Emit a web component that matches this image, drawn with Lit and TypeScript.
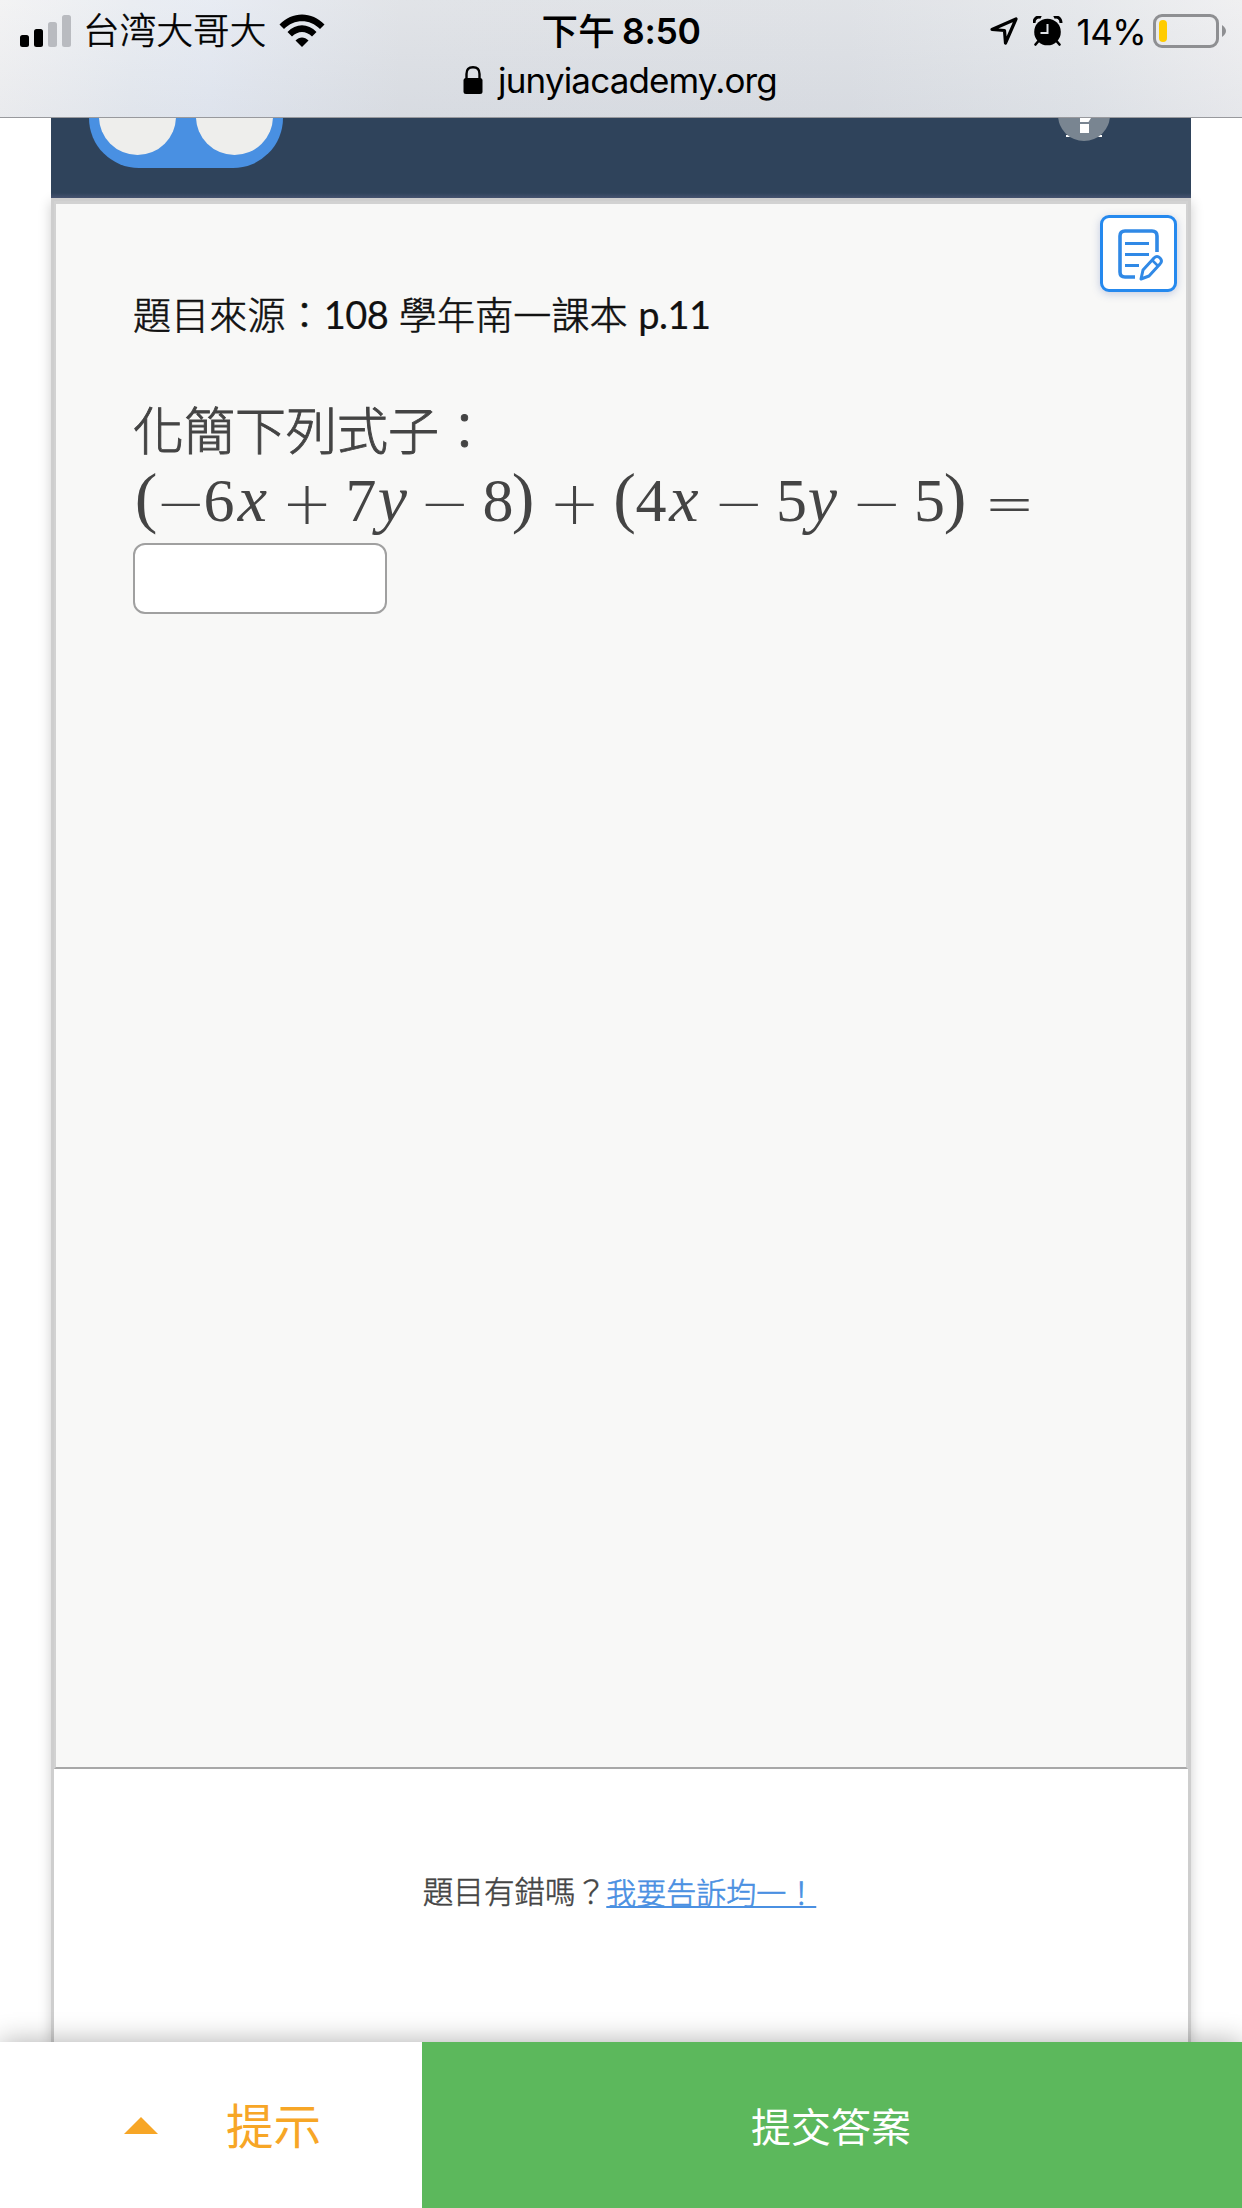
import { LitElement, html, css, svg } from "lit";
import { customElement } from "lit/decorators.js";

type Token = { text: string; center: number; kind: "num" | "var" | "op" | "paren" };

/* Glyph centres of the formula, in pixels from its left edge. */
const FORMULA: Token[] = [
  { text: "(", center: 13, kind: "paren" },
  { text: "−", center: 47.5, kind: "op" },
  { text: "6", center: 86, kind: "num" },
  { text: "x", center: 119.5, kind: "var" },
  { text: "+", center: 174, kind: "op" },
  { text: "7", center: 228, kind: "num" },
  { text: "y", center: 259.5, kind: "var" },
  { text: "−", center: 311.5, kind: "op" },
  { text: "8", center: 365, kind: "num" },
  { text: ")", center: 390, kind: "paren" },
  { text: "+", center: 441.5, kind: "op" },
  { text: "(", center: 491.5, kind: "paren" },
  { text: "4", center: 518, kind: "num" },
  { text: "x", center: 551, kind: "var" },
  { text: "−", center: 605.5, kind: "op" },
  { text: "5", center: 658.5, kind: "num" },
  { text: "y", center: 689.5, kind: "var" },
  { text: "−", center: 743.5, kind: "op" },
  { text: "5", center: 796.5, kind: "num" },
  { text: ")", center: 822, kind: "paren" },
  { text: "=", center: 876.5, kind: "op" },
];

@customElement("status-bar")
export class StatusBar extends LitElement {
  static styles = css`
    :host {
      display: flex;
      flex-direction: column;
      box-sizing: border-box;
      height: 118px;
      border-bottom: 1px solid #98999d;
      color: #000;
      font-family: Inter, "Noto Sans CJK SC", sans-serif;
      background:
        linear-gradient(to bottom, rgba(255, 255, 255, 0.2), rgba(205, 211, 222, 0.2)),
        linear-gradient(to right, #f0f0f1 0, #e5e9ef 130px, #e2e7f0 210px, #dadde2 400px, #d9dce1 850px, #e0e3e7 1080px, #ececee 1242px);
    }
    .row {
      display: grid;
      grid-template-columns: 1fr auto 1fr;
      height: 62px;
      align-items: center;
    }
    .left, .right, .clock, .address { display: flex; align-items: center; white-space: nowrap; }
    .left { padding-left: 20px; }
    .right { justify-content: flex-end; padding-right: 15px; }
    .carrier { font-size: 36.5px; font-weight: 300; margin-left: 12px; margin-right: 12px; line-height: 60px; letter-spacing: 0.2px; -webkit-text-stroke: 0.6px #000; }
    .clock { font-size: 35.5px; font-weight: 600; letter-spacing: -0.3px; line-height: 60px; gap: 7px; padding-top: 1px; }
    .ampm { font-weight: 500; font-size: 36.5px; letter-spacing: 0.3px; }
    .percent { font-size: 35px; margin: 0 7px 0 14px; letter-spacing: -0.6px; padding-top: 1px; }
    .alarm { margin-left: 15px; }
    .address { justify-content: center; height: 36px; gap: 15px; font-size: 35px; letter-spacing: -0.85px; padding-right: 2px; }
    svg { display: block; }
  `;

  render() {
    return html`
      <div class="row">
        <div class="left">
          <svg width="51" height="32" viewBox="0 0 51 32">
            <rect x="0" y="20" width="9" height="12" rx="2.5" />
            <rect x="14" y="14" width="9" height="18" rx="2.5" />
            <rect x="28" y="7" width="9" height="25" rx="2.5" fill="#b9bbc0" />
            <rect x="42" y="0" width="9" height="32" rx="2.5" fill="#b9bbc0" />
          </svg>
          <span class="carrier">台湾大哥大</span>
          <svg width="46" height="34" viewBox="0 0 46 34">
            <path d="M0.5 10.5C13-3 33-3 45.500 10.500L41 15C31 4.500 15 4.500 5 15Z" />
            <path d="M8.500 18C17 9 29 9 37.500 18L33 22.500C27 16.500 19 16.500 13 22.500Z" />
            <path d="M16.500 26.500C20.500 22.500 25.500 22.500 29.500 26.500L23 33Z" />
          </svg>
        </div>
        <div class="clock"><span class="ampm">下午</span><span>8:50</span></div>
        <div class="right">
          <svg width="28" height="28" viewBox="0 0 28 28">
            <path d="M2 12.500L26 2L15.500 26L14.500 13.500Z" fill="none" stroke="#000" stroke-width="3.200" stroke-linejoin="round" />
          </svg>
          <svg class="alarm" width="30" height="30" viewBox="0 0 30 30">
            <circle cx="14.500" cy="16" r="13.300" />
            <path d="M1 7C1 2 5 0 8 1.500M28 7C28 2 24 0 21 1.500" stroke="#000" stroke-width="3" fill="none" />
            <path d="M5.500 25L2.500 28.500M23.500 25L26.500 28.500" stroke="#000" stroke-width="2.600" stroke-linecap="round" />
            <path d="M14.500 8V17H7.500" fill="none" stroke="#e0e3e7" stroke-width="2" />
          </svg>
          <span class="percent">14%</span>
          <svg width="74" height="34" viewBox="0 0 74 34">
            <rect x="1.500" y="1.500" width="63" height="31" rx="7.500" fill="none" stroke="#8e8f92" stroke-width="3" />
            <rect x="6" y="6" width="8" height="22" rx="4" fill="#fc0" />
            <path d="M69 11Q77 17 69 23Z" fill="#8e8f92" />
          </svg>
        </div>
      </div>
      <div class="address">
        <svg width="20" height="28" viewBox="0 0 20 28">
          <rect x="0.500" y="12" width="19" height="16" rx="2.500" />
          <path d="M3.500 13V8Q3.500 1.300 10 1.300T16.500 8V13" fill="none" stroke="#000" stroke-width="2.400" />
        </svg>
        <span>junyiacademy.org</span>
      </div>
    `;
  }
}

@customElement("math-formula")
export class MathFormula extends LitElement {
  static styles = css`
    :host { display: block; height: 74px; }
    svg { display: block; overflow: visible; }
    text { fill: #444; text-anchor: middle; }
    .num, .var, .paren { font-family: "Liberation Serif", serif; font-size: 62px; }
    .var { font-style: italic; font-size: 66px; }
    .paren { font-size: 68px; }
    .op { font-family: "DejaVu Sans", sans-serif; font-weight: 200; font-size: 61px; }
  `;

  private baseline(kind: Token["kind"]) {
    return kind === "paren" ? 51 : kind === "op" ? 55 : 52;
  }

  render() {
    return html`
      <svg width="900" height="74" viewBox="0 0 900 74">
        ${FORMULA.map(
          (t) => svg`<text class=${t.kind} x=${t.center} y=${this.baseline(t.kind)}>${t.text}</text>`
        )}
      </svg>
    `;
  }
}

@customElement("app-root")
export class AppRoot extends LitElement {
  static styles = css`
    :host {
      display: flex;
      flex-direction: column;
      height: 2208px;
      overflow: hidden;
      background: #fff;
      color: #444;
      font-family: Lato, "Noto Sans CJK TC", sans-serif;
    }
    svg { display: block; }
    status-bar { flex: none; }
    .page {
      flex: 1;
      min-height: 0;
      display: flex;
      flex-direction: column;
      margin: 0 51px;
    }
    .header {
      flex: none;
      display: flex;
      justify-content: space-between;
      align-items: flex-start;
      height: 80px;
      padding: 0 81px 0 38px;
      box-sizing: border-box;
      background: linear-gradient(to bottom, #2f435b 75px, #465370 80px);
      position: relative;
      z-index: 1;
    }
    .card {
      flex: 1;
      min-height: 0;
      display: flex;
      flex-direction: column;
      border: solid #cecece;
      border-width: 3px 3px 0;
      box-shadow: 0 4px 12px rgba(0, 0, 0, 0.2);
      background: #fff;
    }
    .exercise {
      flex: none;
      display: flex;
      flex-direction: column;
      height: 1568px;
      box-sizing: border-box;
      border: solid #d2d2d2;
      border-width: 3px 2px 2px;
      border-bottom-color: #a8a8a8;
      background: #f8f8f7;
      padding: 11px 9px 0 77px;
    }
    .note {
      align-self: flex-end;
      width: 77px;
      height: 77px;
      box-sizing: border-box;
      border: 3px solid #2589ee;
      border-radius: 9px;
      background: #fff;
      box-shadow: 0 2px 8px rgba(60, 90, 170, 0.28);
      padding: 9px 0 0 13px;
    }
    .source {
      color: #111;
      font-size: 38px;
      font-weight: 300;
      line-height: 50px;
      letter-spacing: 0.15px;
      margin-top: -3px;
      white-space: pre;
      -webkit-text-stroke: 0.6px #111;
    }
    .latin { font-weight: 400; letter-spacing: -0.5px; -webkit-text-stroke: 0.2px #111; }
    .prompt { font-size: 51px; font-weight: 300; line-height: 70px; margin-top: 57px; -webkit-text-stroke: 0.9px #444; }
    math-formula { margin-top: 3px; }
    .answer {
      width: 254px;
      height: 71px;
      box-sizing: border-box;
      border: 2px solid #a0a0a0;
      border-radius: 12px;
      background: #fff;
      margin: 0;
      padding: 0 12px;
      font: inherit;
      font-size: 40px;
    }
    .report {
      display: flex;
      justify-content: center;
      margin: 101px 3px 0 0;
      font-size: 30.6px;
      font-weight: 300;
      line-height: 44px;
      -webkit-text-stroke: 0.5px currentColor;
    }
    .report-link {
      color: #4a90e2;
      -webkit-text-stroke: 0.6px #4a90e2;
      font-size: 30px;
      text-decoration: underline;
      text-decoration-thickness: 2px;
      text-underline-offset: 2px;
      text-decoration-skip-ink: none;
    }
    .actions {
      flex: none;
      display: flex;
      height: 166px;
      position: relative;
      z-index: 2;
      background: #fff;
      box-shadow: 0 0 26px rgba(0, 0, 0, 0.32);
    }
    .hint {
      width: 422px;
      box-sizing: border-box;
      display: flex;
      align-items: center;
      padding-left: 124px;
      gap: 68px;
      color: #f7a626;
      font-size: 47.5px;
    }
    .submit {
      flex: 1;
      display: flex;
      align-items: center;
      justify-content: center;
      background: #5cb85c;
      color: #fff;
      font-size: 40px;
    }
    .hint-label, .submit-label { line-height: 60px; }
    .hint-label { padding-top: 2px; }
    .submit-label { padding: 4px 2px 0 0; }
  `;

  render() {
    return html`
      <status-bar></status-bar>
      <main class="page">
        <header class="header">
          <svg width="194" height="50" viewBox="0 0 194 50">
            <path d="M0 0A50 50 0 0 0 50 50H144A50 50 0 0 0 194 0Z" fill="#4990e2" />
            <circle cx="48.500" cy="-1.500" r="38.500" fill="#eeeeec" />
            <circle cx="145.500" cy="-1.500" r="38.500" fill="#eeeeec" />
          </svg>
          <svg width="52" height="24" viewBox="0 0 52 24">
            <path d="M8 17h36v2H8z" fill="#fff" />
            <circle cx="26" cy="-3" r="26" fill="#798591" />
            <path d="M22 0H33L30.500 4H22ZM22 6h9v9h-9z" fill="#fff" />
          </svg>
        </header>
        <section class="card">
          <div class="exercise">
            <div class="note">
              <svg width="50" height="56" viewBox="0 0 50 56" fill="none" stroke="#3089e6" stroke-width="3.600">
                <path d="M41 25V9Q41 4 36 4H9Q4 4 4 9V45Q4 50 9 50H19" />
                <path d="M9 16.500H33M9 27.500H33M9 38.500H23" stroke-width="3" />
                <path d="M25 52L27 43L38 31Q41 28 44 31T44 37L33 49Z" stroke-width="3" stroke-linejoin="round" />
                <path d="M36 33L42 39" stroke-width="2.500" />
              </svg>
            </div>
            <div class="source">題目來源：<span class="latin">108</span> 學年南一課本 <span class="latin">p.11</span></div>
            <div class="prompt">化簡下列式子：</div>
            <math-formula></math-formula>
            <input class="answer" type="text" />
          </div>
          <div class="report">
            <span>題目有錯嗎？</span><a class="report-link">我要告訴均一！</a>
          </div>
        </section>
      </main>
      <footer class="actions">
        <div class="hint">
          <svg width="34" height="17" viewBox="0 0 34 17"><path d="M17 0L34 17H0Z" fill="#f7a626" /></svg>
          <span class="hint-label">提示</span>
        </div>
        <div class="submit"><span class="submit-label">提交答案</span></div>
      </footer>
    `;
  }
}
